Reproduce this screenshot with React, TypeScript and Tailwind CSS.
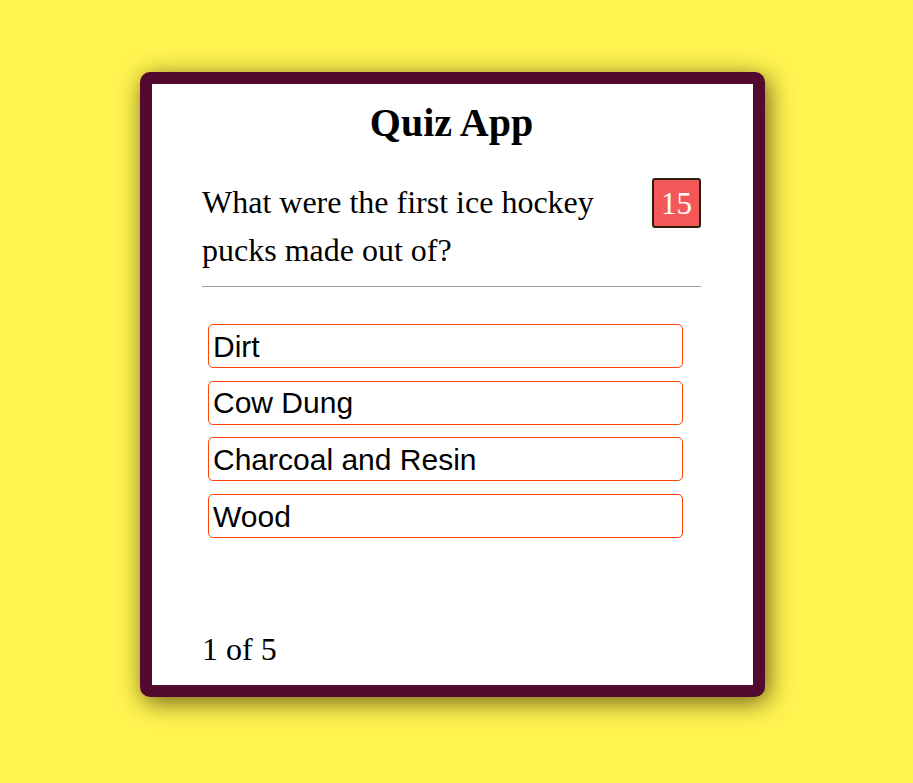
import React, { useState } from "react";

const answers = ["Dirt", "Cow Dung", "Charcoal and Resin", "Wood"];

export default function App() {
  const [current] = useState(0);
  const [time] = useState(15);

  return (
    <div className="min-h-[783px] w-full bg-[#fff450] pt-[72px] pl-[140px] font-['Liberation_Serif',serif]">
      <div className="flex h-[625px] w-[625px] flex-col rounded-[10px] border-[12px] border-[#520a2e] bg-white pt-[16px] pr-[52px] pb-[19px] pl-[50px] shadow-[3px_5px_24px_rgba(40,30,0,0.7)]">
        <h1 className="text-center text-[40px] leading-[45px] font-bold text-black">
          Quiz App
        </h1>
        <div className="mt-[33px] flex items-start justify-between border-b border-[#a0a0a0] pb-[12px]">
          <p className="w-[430px] text-[32px] leading-[48px] text-black">
            What were the first ice hockey pucks made out of?
          </p>
          <div className="flex h-[50px] w-[49px] items-center justify-center rounded-[3px] border-2 border-[#2c1f10] bg-[#f45757] pt-[2px] text-[31px] text-white">
            {time}
          </div>
        </div>
        <div className="mt-[37px] ml-[6px] flex w-[475px] flex-col gap-[12.7px]">
          {answers.map((a, i) => (
            <button
              key={"answer" + String(i)}
              className="flex h-[44px] items-center rounded-[5px] border border-[#ff4500] bg-white pl-[4px] text-left font-['Liberation_Sans',sans-serif] text-[30px] text-black"
            >
              {a}
            </button>
          ))}
        </div>
        <div className="mt-auto text-[32px] leading-[34px] text-black">
          {current + 1} of {answers.length + 1}
        </div>
      </div>
    </div>
  );
}
